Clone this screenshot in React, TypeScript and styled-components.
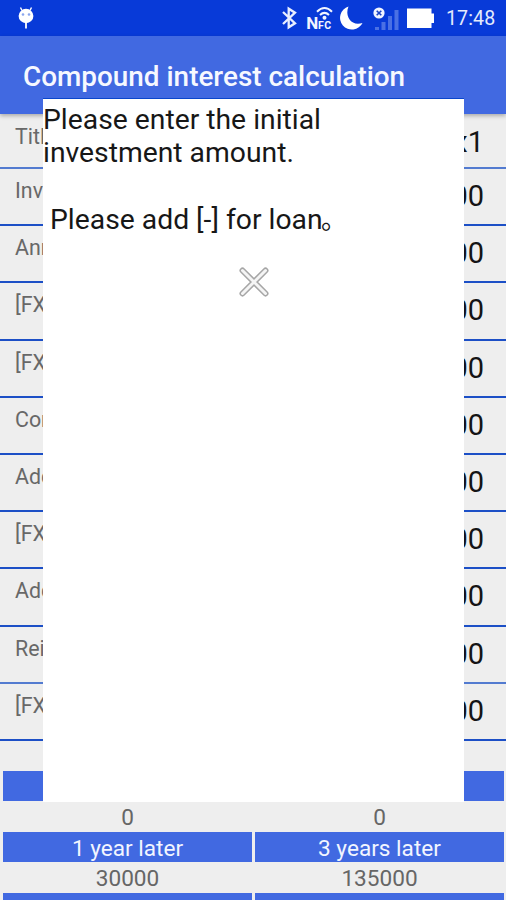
import React from "react";
import styled, { createGlobalStyle } from "styled-components";

const GlobalStyle = createGlobalStyle`
  * { box-sizing: border-box; }
  html, body { margin: 0; padding: 0; }
  body { font-family: Roboto, "Noto Sans CJK JP", sans-serif; background: #eeeeee; overflow: hidden; }
`;

const Screen = styled.div`
  position: relative;
  width: 506px;
  height: 900px;
  overflow: hidden;
  background: #eeeeee;
  display: flex;
  flex-direction: column;
`;

const StatusBar = styled.div`
  flex: none;
  height: 36px;
  background: #083ad8;
  display: flex;
  align-items: center;
  justify-content: space-between;
  padding: 0 10px 0 17px;
  color: #e4eafc;
`;

const StatusIcons = styled.div`
  display: flex;
  align-items: center;
`;

const Clock = styled.span`
  width: 50px;
  margin-left: 11px;
  font-size: 19.6px;
  line-height: 36px;
  letter-spacing: 0.1px;
  padding-top: 2px;
  white-space: nowrap;
`;

const AppBar = styled.header`
  flex: none;
  height: 78px;
  background: #4169e1;
  box-shadow: 0 2px 4px rgba(0, 0, 0, 0.28);
  z-index: 1;
  display: flex;
  align-items: center;
  padding: 4px 0 0 23px;
`;

const Title = styled.h1`
  margin: 0;
  font-size: 27.9px;
  font-weight: 500;
  line-height: 32px;
  color: #f6f8ff;
  white-space: nowrap;
`;

const Form = styled.div`
  flex: none;
  height: 627px;
`;

const Row = styled.div<{ $first?: boolean; $soft?: boolean }>`
  height: ${(p) => (p.$first ? 55 : 57.2)}px;
  display: flex;
  justify-content: space-between;
  padding: ${(p) => (p.$first ? 9 : 8)}px 22px 0 15px;
  background: linear-gradient(${(p) => (p.$soft ? "#537bd0, #537bd0" : "#1c4fc6, #1c4fc6")}) bottom / 100% 2px
    no-repeat;
`;

const Label = styled.span`
  font-size: 21.4px;
  line-height: 28.600px;
  color: #686868;
`;

const Value = styled.span`
  font-size: 29px;
  line-height: 38.600px;
  color: #141414;
`;

const Results = styled.div`
  flex: none;
  margin-top: 30px;
  display: grid;
  grid-template-columns: 249px 249px;
  column-gap: 3px;
  padding-left: 3px;
  grid-auto-rows: 30px 31px;
`;

const Heading = styled.div`
  background: #4169e1;
  color: #f2f5ff;
  font-size: 22.6px;
  line-height: 33px;
  text-align: center;
  white-space: nowrap;
`;

const Amount = styled.div`
  color: #666666;
  font-size: 22.6px;
  line-height: 33px;
  text-align: center;
`;

const Dialog = styled.div`
  position: absolute;
  left: 43px;
  top: 98px;
  width: 421px;
  height: 704px;
  z-index: 2;
  background: #ffffff;
  border-top: 1px solid #0a46cc;
  display: flex;
  flex-direction: column;
  align-items: center;
`;

const Message = styled.p`
  align-self: stretch;
  margin: 4px 0 0;
  font-size: 28.3px;
  line-height: 33.4px;
  height: 134px;
  color: #171717;
  white-space: pre;
`;

const FullStop = styled.span`
  margin-left: -1.5px;
  font-size: 26px;
  line-height: 1;
`;

const CloseButton = styled.button`
  border: 0;
  padding: 0;
  margin-top: 30px;
  width: 30px;
  height: 30px;
  background: transparent;
  display: block;
`;

const rows = [
  { label: "Title", value: "x1", soft: true },
  { label: "Investment", value: "0.00" },
  { label: "Annual", value: "0.00" },
  { label: "[FX]", value: "0.00" },
  { label: "[FX]", value: "0.00" },
  { label: "Compound", value: "0.00" },
  { label: "Additional", value: "0.00" },
  { label: "[FX]", value: "0.00" },
  { label: "Additional", value: "0.00" },
  { label: "Reinvest", value: "0.00", soft: true },
  { label: "[FX]", value: "0.00" },
];

const Notification = () => (
  <svg width="18" height="24" viewBox="0 0 18 24">
    <path d="M3.5 1.5 5 4.5M14.5 1.5 13 4.5" stroke="#fff" strokeWidth="1.4" />
    <ellipse cx="9" cy="10" rx="7.4" ry="7.2" fill="#fff" />
    <circle cx="6" cy="8.5" r="1.3" fill="#8aa6ee" />
    <circle cx="12" cy="8.5" r="1.3" fill="#8aa6ee" />
    <path d="M9 16v6.5" stroke="#fff" strokeWidth="1.8" />
  </svg>
);

const SystemIcons = () => (
  <svg width="155" height="36" viewBox="280 0 155 36">
    <path d="m283 12 12 11.3-6.3 4V8.7l6.3 4L283 24" fill="none" stroke="#e9efff" strokeWidth="2.3" />
    <text x="306.300" y="29" fontSize="17" fontWeight="700" fill="#f2f5ff">
      N
    </text>
    <text x="318" y="29" fontSize="10.500" fontWeight="700" letterSpacing="0.4" fill="#f2f5ff">
      FC
    </text>
    <path d="M317 11.8q7.500-7.500 15 0M320 15q4.500-4.300 9 0" fill="none" stroke="#f2f5ff" strokeWidth="2" />
    <circle cx="324.5" cy="17.700" r="2" fill="#f2f5ff" />
    <path d="M348.5 6.5a11.8 11.8 0 1 0 14 16.4c-5 1.8-10.5.6-13.1-3.6-2.6-4.1-2.6-8.6-.9-12.8Z" fill="#fff" />
    <path d="M375 27h4v3h-4zM381.5 22h4v8h-4zM388 16h4v14h-4zM394.500 10h4v20h-4z" fill="#4a70e4" />
    <circle cx="379" cy="13" r="5.600" fill="#f2f5ff" />
    <path d="m376.700 10.700 4.600 4.600m0-4.600-4.600 4.600" stroke="#1b43c4" strokeWidth="1.600" />
    <path d="M407 8.500h24.500v5h2.500v9.500h-2.500v5H407z" fill="#fff" />
  </svg>
);

export default function App() {
  return (
    <>
      <GlobalStyle />
      <Screen>
        <StatusBar>
          <Notification />
          <StatusIcons>
            <SystemIcons />
            <Clock>17:48</Clock>
          </StatusIcons>
        </StatusBar>
        <AppBar>
          <Title>Compound interest calculation</Title>
        </AppBar>
        <Form>
          {rows.map((row, i) => (
            <Row key={i} $first={i === 0} $soft={row.soft}>
              <Label>{row.label}</Label>
              <Value>{row.value}</Value>
            </Row>
          ))}
        </Form>
        <Results>
          <Heading />
          <Heading />
          <Amount>0</Amount>
          <Amount>0</Amount>
          <Heading>1 year later</Heading>
          <Heading>3 years later</Heading>
          <Amount>30000</Amount>
          <Amount>135000</Amount>
          <Heading>5 years later</Heading>
          <Heading>10 years later</Heading>
        </Results>
        <Dialog role="dialog">
          <Message>
            {"Please enter the initial\ninvestment amount.\n\n Please add [-] for loan"}
            <FullStop>。</FullStop>
          </Message>
          <CloseButton aria-label="Close">
            <svg width="30" height="30" viewBox="0 0 30 30" strokeLinecap="round">
              <path d="m3.500 3.500 23 23M26.500 3.500l-23 23" stroke="#a6a6a6" strokeWidth="6" />
              <path d="m3.500 3.500 23 23M26.500 3.500l-23 23" stroke="#f5f5f5" strokeWidth="3" />
            </svg>
          </CloseButton>
        </Dialog>
      </Screen>
    </>
  );
}
